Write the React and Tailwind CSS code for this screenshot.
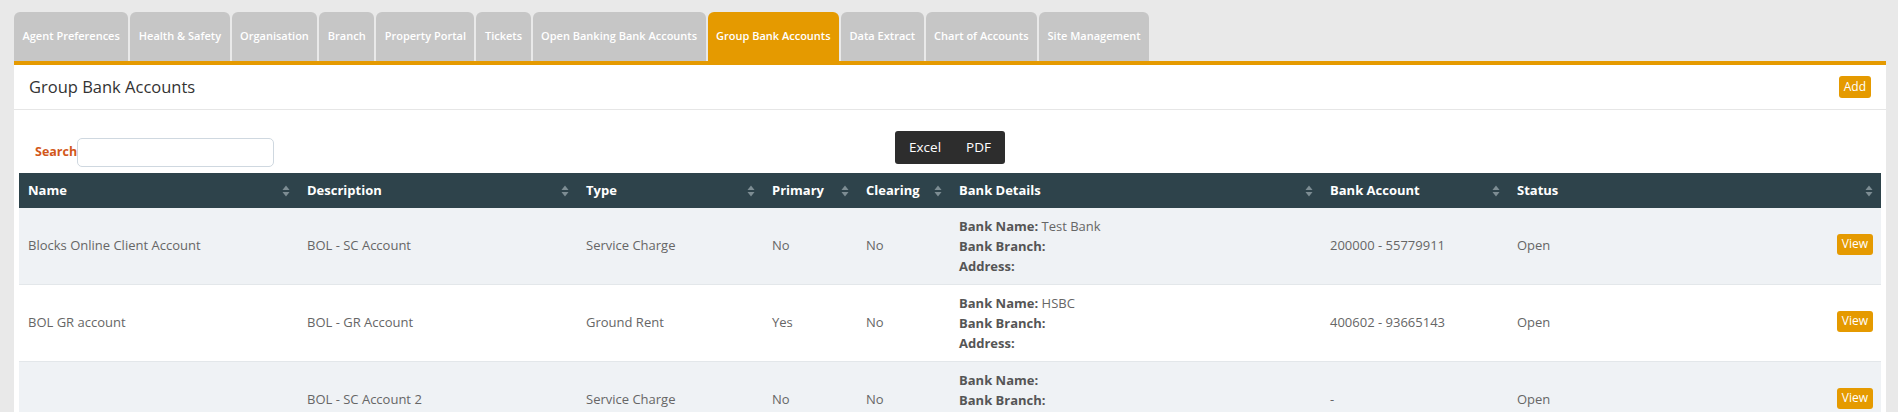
import { useState } from 'react';

const tabs = [
    'Agent Preferences',
    'Health & Safety',
    'Organisation',
    'Branch',
    'Property Portal',
    'Tickets',
    'Open Banking Bank Accounts',
    'Group Bank Accounts',
    'Data Extract',
    'Chart of Accounts',
    'Site Management',
]

const columns = [
    { label: 'Name', w: 'w-[279px]' },
    { label: 'Description', w: 'w-[279px]' },
    { label: 'Type', w: 'w-[186px]' },
    { label: 'Primary', w: 'w-[94px]' },
    { label: 'Clearing', w: 'w-[93px]' },
    { label: 'Bank Details', w: 'w-[371px]' },
    { label: 'Bank Account', w: 'w-[187px]' },
    { label: 'Status', w: '' },
]

const accounts = [
    { name: 'Blocks Online Client Account', description: 'BOL - SC Account', type: 'Service Charge', primary: 'No', clearing: 'No', bankName: 'Test Bank', account: '200000 - 55779911', status: 'Open' },
    { name: 'BOL GR account', description: 'BOL - GR Account', type: 'Ground Rent', primary: 'Yes', clearing: 'No', bankName: 'HSBC', account: '400602 - 93665143', status: 'Open' },
    { name: '', description: 'BOL - SC Account 2', type: 'Service Charge', primary: 'No', clearing: 'No', bankName: '', account: '-', status: 'Open' },
]

function SortIcon() {
    return (
        <svg width="8" height="12" viewBox="0 0 8 12" className="shrink-0">
            <path d="M4 0.5 L7.5 5 H0.5 Z" fill="#7d8d93" />
            <path d="M4 11.5 L7.5 7 H0.5 Z" fill="#7d8d93" />
        </svg>
    )
}

export default function App() {
    const [active, setActive] = useState('Group Bank Accounts')
    const [search, setSearch] = useState('')

    return (
        <div className="min-h-screen bg-[#e9e9e9] pt-[12px] pl-[14px] pr-[12px] font-['Open_Sans',sans-serif]">
            <div className="flex gap-[2px] items-end">
                {tabs.map((t) => (
                    <button
                        key={t}
                        onClick={() => setActive(t)}
                        className={`h-[49px] px-[8.5px] rounded-t-[6px] text-[11px] font-semibold text-white whitespace-nowrap ${t === active ? 'bg-[#e59a00]' : 'bg-[#c6c6c6]'}`}
                    >
                        {t}
                    </button>
                ))}
            </div>
            <div className="bg-white border-t-4 border-[#e59a00]">
                <div className="h-[45px] flex items-center justify-between pl-[15px] pr-[15px] border-b border-[#e6e6e6]">
                    <h3 className="text-[16.5px] text-[#333]">Group Bank Accounts</h3>
                    <button className="h-[22px] px-[5px] rounded-[3px] bg-[#e59a00] text-white text-[12px]">Add</button>
                </div>
                <div className="px-[5px]">
                    <div className="grid grid-cols-[1fr_auto_1fr] items-start pt-[21px] pb-[6px]">
                        <div className="flex items-center mt-[7px] pl-[16px]">
                            <label className="text-[12.5px] font-bold text-[#d2581a]">Search</label>
                            <input
                                value={search}
                                onChange={(e) => setSearch(e.target.value)}
                                className="w-[197px] h-[29px] border border-[#cfd8e0] rounded-[5px] outline-none px-2 text-[13px]"
                            />
                        </div>
                        <div className="flex h-[33px] items-center bg-[#2d2d2d] rounded-[3px] px-[14px] gap-[25px] text-white text-[13.5px]">
                            <span>Excel</span>
                            <span>PDF</span>
                        </div>
                        <div />
                    </div>
                    <table className="w-full table-fixed border-collapse text-[13px] text-[#666]">
                        <thead>
                            <tr className="bg-[#2e434b] h-[35px]">
                                {columns.map((c) => (
                                    <th key={c.label} className={`${c.w} pl-[9px] pr-[8px] text-left text-white font-bold`}>
                                        <div className="flex items-center justify-between">
                                            <span>{c.label}</span>
                                            <SortIcon />
                                        </div>
                                    </th>
                                ))}
                            </tr>
                        </thead>
                        <tbody>
                            {accounts.map((a, i) => (
                                <tr key={i} className={`border-b border-[#e3e7ea] ${i % 2 === 0 ? 'bg-[#eff2f5]' : 'bg-white'}`}>
                                    <td className="pl-[9px] py-[8px]">{a.name}</td>
                                    <td className="pl-[9px]">{a.description}</td>
                                    <td className="pl-[9px]">{a.type}</td>
                                    <td className="pl-[9px]">{a.primary}</td>
                                    <td className="pl-[9px]">{a.clearing}</td>
                                    <td className="pl-[9px] py-[8px] leading-[20px]">
                                        <div><span className="font-bold text-[#555]">Bank Name:</span> {a.bankName}</div>
                                        <div><span className="font-bold text-[#555]">Bank Branch:</span></div>
                                        <div><span className="font-bold text-[#555]">Address:</span></div>
                                    </td>
                                    <td className="pl-[9px]">{a.account}</td>
                                    <td className="pl-[9px] pr-[8px]">
                                        <div className="flex items-center justify-between">
                                            <span>{a.status}</span>
                                            <button className="h-[21px] px-[5px] rounded-[3px] bg-[#e59a00] text-white text-[12px] -mt-[4px]">View</button>
                                        </div>
                                    </td>
                                </tr>
                            ))}
                        </tbody>
                    </table>
                </div>
            </div>
        </div>
    )
}
